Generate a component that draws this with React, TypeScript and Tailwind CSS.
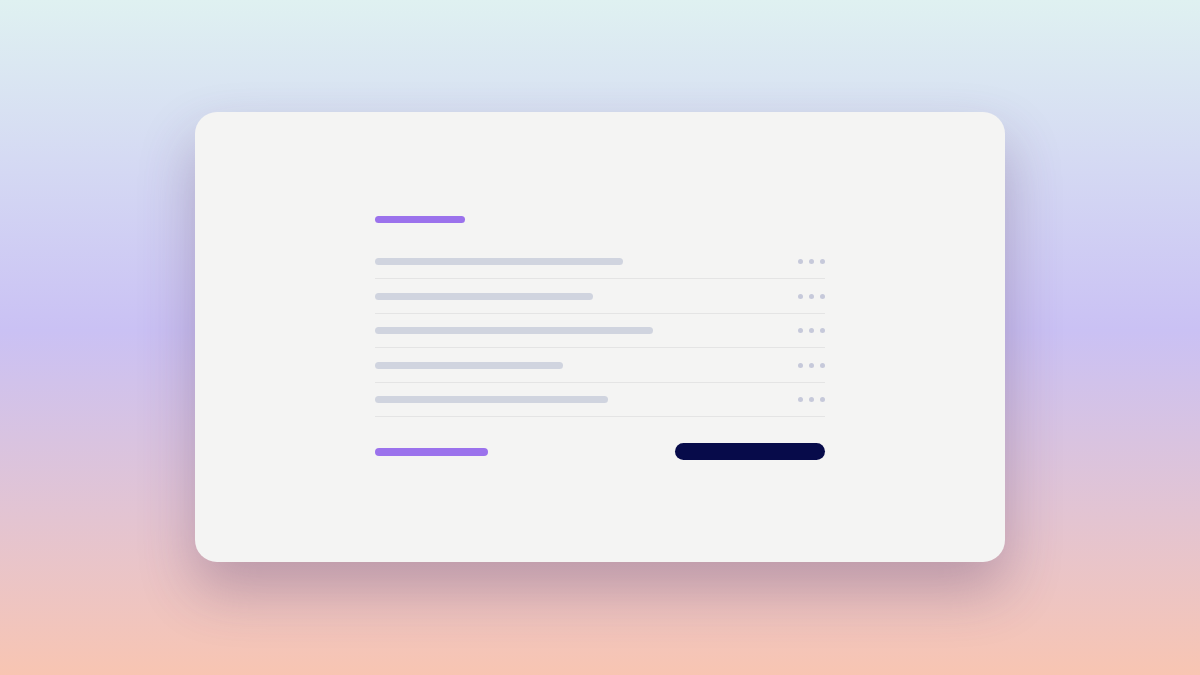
const rows = [248, 218, 278, 188, 233];

function Dots() {
  return (
    <div className="flex items-center gap-[6px]">
      <span className="w-[5px] h-[5px] rounded-full bg-[#c6c9da]" />
      <span className="w-[5px] h-[5px] rounded-full bg-[#c6c9da]" />
      <span className="w-[5px] h-[5px] rounded-full bg-[#c6c9da]" />
    </div>
  );
}

export default function App() {
  return (
    <div className="w-full h-screen pb-[1px] flex items-center justify-center bg-gradient-to-b from-[#dff1f1] via-[#cac1f4] via-49% to-[#f8c5b2]">
      <div className="w-[810px] h-[450px] rounded-[22px] bg-[#f4f4f3] shadow-[0_28px_55px_rgba(90,60,100,0.32)] flex items-center justify-center">
        <div className="w-[450px] mt-[2px] flex flex-col">
          <div className="w-[90px] h-[7px] rounded-full bg-[#9b72ec]" />
          <div className="mt-[22px] flex flex-col">
            {rows.map((w, i) => (
              <div
                key={i}
                className="h-[34.5px] flex items-center justify-between border-b border-[#e4e4e4]"
              >
                <div className="h-[7px] rounded-full bg-[#d0d4df]" style={{ width: w }} />
                <Dots />
              </div>
            ))}
          </div>
          <div className="mt-[26px] flex items-center justify-between">
            <div className="w-[113px] h-[8px] rounded-full bg-[#9b72ec]" />
            <div className="w-[150px] h-[17px] rounded-full bg-[#070b4a]" />
          </div>
        </div>
      </div>
    </div>
  );
}
